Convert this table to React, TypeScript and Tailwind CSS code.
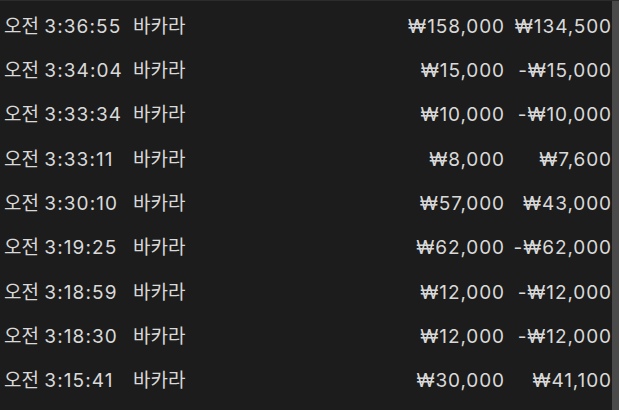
const rows = [
  { time: '3:36:55', game: '바카라', bet: '₩158,000', result: '₩134,500' },
  { time: '3:34:04', game: '바카라', bet: '₩15,000', result: '-₩15,000' },
  { time: '3:33:34', game: '바카라', bet: '₩10,000', result: '-₩10,000' },
  { time: '3:33:11', game: '바카라', bet: '₩8,000', result: '₩7,600' },
  { time: '3:30:10', game: '바카라', bet: '₩57,000', result: '₩43,000' },
  { time: '3:19:25', game: '바카라', bet: '₩62,000', result: '-₩62,000' },
  { time: '3:18:59', game: '바카라', bet: '₩12,000', result: '-₩12,000' },
  { time: '3:18:30', game: '바카라', bet: '₩12,000', result: '-₩12,000' },
  { time: '3:15:41', game: '바카라', bet: '₩30,000', result: '₩41,100' },
];

export default function App() {
  return (
    <div className="flex h-[410px] w-[619px] overflow-hidden border-t border-[#2c2c2c] bg-[#1c1c1c] font-['Inter','Noto_Sans_CJK_KR',sans-serif] text-[19px] text-[#d9d9d9]">
      <div className="flex flex-1 flex-col pt-[4px]">
        {rows.map((r, i) => (
          <div key={i} className="flex h-[44.3px] items-center">
            <div className="w-[133px] pl-[4px] whitespace-nowrap">
              오전 <span className="tracking-[1.1px]">{r.time}</span>
            </div>
            <div className="flex-1">{r.game}</div>
            <div className="text-right tracking-[0.9px]">{r.bet}</div>
            <div className="w-[107px] text-right tracking-[0.9px]">{r.result}</div>
          </div>
        ))}
      </div>
      <div className="w-[7px] bg-[#4a4a4a]" />
    </div>
  );
}
